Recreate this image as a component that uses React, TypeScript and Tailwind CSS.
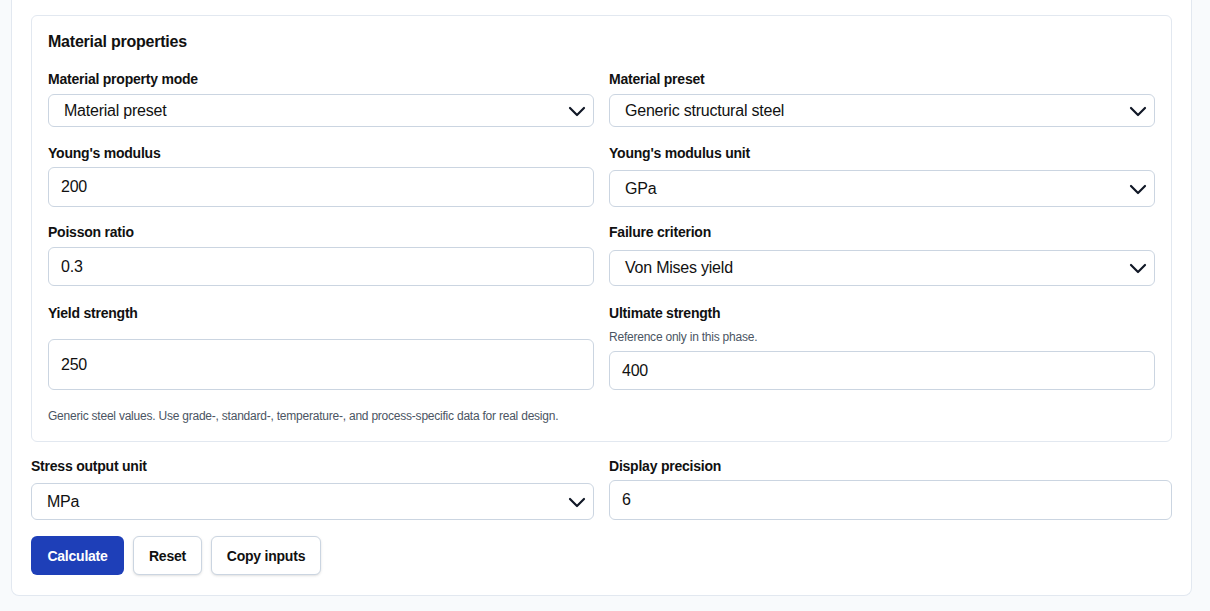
import React from "react"

const font = { fontFamily: '"Liberation Sans", Arial, sans-serif', letterSpacing: "-0.014em" }

function Chevron() {
  return (
    <svg
      className="pointer-events-none absolute right-[8px] top-1/2 -translate-y-1/2"
      width="18"
      height="12"
      viewBox="0 0 18 12"
      fill="none"
    >
      <path d="M2 3l7 7 7-7" stroke="#111827" strokeWidth="2.2" strokeLinecap="round" strokeLinejoin="round" />
    </svg>
  )
}

function Select({ value, h }: { value: string; h: string }) {
  return (
    <div className={`relative w-full ${h}`}>
      <div className="flex h-full items-center rounded-md border border-[#cbd5e1] bg-white pl-[15px] pr-10 text-base text-[#111]">
        {value}
      </div>
      <Chevron />
    </div>
  )
}

function Input({ value, h }: { value: string; h: string }) {
  return (
    <div className={`flex w-full items-center rounded-md border border-[#cbd5e1] bg-white pl-3 text-base text-[#111] ${h}`}>
      {value}
    </div>
  )
}

function Label({ children }: { children: React.ReactNode }) {
  return <div className="h-5 text-sm font-bold leading-5 text-[#111]">{children}</div>
}

export default function App() {
  return (
    <div className="min-h-[611px] bg-[#f8fafc] pb-4 pl-[11px] pr-[18px]" style={font}>
      <div className="rounded-b-lg border border-t-0 border-[#e2e8f0] bg-white px-[19px] pb-5 pt-[15px]">
        <div className="rounded-md border border-[#e2e8f0] px-4 pb-[17px] pt-4">
          <h2 className="text-base font-bold leading-5 text-[#111]">Material properties</h2>

          <div className="mt-[17px] grid grid-cols-2 gap-x-[15px]">
            <div className="flex flex-col">
              <Label>Material property mode</Label>
              <div className="mt-[5px]">
                <Select value="Material preset" h="h-[33px]" />
              </div>
            </div>
            <div className="flex flex-col">
              <Label>Material preset</Label>
              <div className="mt-[5px]">
                <Select value="Generic structural steel" h="h-[33px]" />
              </div>
            </div>
          </div>

          <div className="mt-4 grid grid-cols-2 gap-x-[15px]">
            <div className="flex flex-col">
              <Label>Young's modulus</Label>
              <div className="mt-[4px]">
                <Input value="200" h="h-[40px]" />
              </div>
            </div>
            <div className="flex flex-col">
              <Label>Young's modulus unit</Label>
              <div className="mt-[7px]">
                <Select value="GPa" h="h-[37px]" />
              </div>
            </div>
          </div>

          <div className="mt-[15px] grid grid-cols-2 gap-x-[15px]">
            <div className="flex flex-col">
              <Label>Poisson ratio</Label>
              <div className="mt-[5px]">
                <Input value="0.3" h="h-[39px]" />
              </div>
            </div>
            <div className="flex flex-col">
              <Label>Failure criterion</Label>
              <div className="mt-[8px]">
                <Select value="Von Mises yield" h="h-[36px]" />
              </div>
            </div>
          </div>

          <div className="mt-[17px] grid grid-cols-2 gap-x-[15px]">
            <div className="flex flex-col">
              <Label>Yield strength</Label>
              <div className="mt-4">
                <Input value="250" h="h-[51px]" />
              </div>
            </div>
            <div className="flex flex-col">
              <Label>Ultimate strength</Label>
              <div className="mt-[6px] h-4 text-xs leading-4 text-[#4b5563]">Reference only in this phase.</div>
              <div className="mt-[6px]">
                <Input value="400" h="h-[39px]" />
              </div>
            </div>
          </div>

          <p className="mt-[18px] text-xs leading-4 text-[#4b5563]">
            Generic steel values. Use grade-, standard-, temperature-, and process-specific data for real design.
          </p>
        </div>

        <div className="mt-[14px] grid grid-cols-2 gap-x-[15px]">
          <div className="flex flex-col">
            <Label>Stress output unit</Label>
            <div className="mt-[7px]">
              <Select value="MPa" h="h-[37px]" />
            </div>
          </div>
          <div className="flex flex-col">
            <Label>Display precision</Label>
            <div className="mt-[4px]">
              <Input value="6" h="h-[40px]" />
            </div>
          </div>
        </div>

        <div className="mt-4 flex gap-[9px]">
          <button className="h-[39px] w-[93px] rounded-md bg-[#1e3fb8] text-sm font-bold text-white">Calculate</button>
          <button className="h-[39px] w-[69px] rounded-md border border-[#cbd5e1] bg-white text-sm font-bold text-[#111] shadow-sm">
            Reset
          </button>
          <button className="h-[39px] w-[110px] rounded-md border border-[#cbd5e1] bg-white text-sm font-bold text-[#111] shadow-sm">
            Copy inputs
          </button>
        </div>
      </div>
    </div>
  )
}
